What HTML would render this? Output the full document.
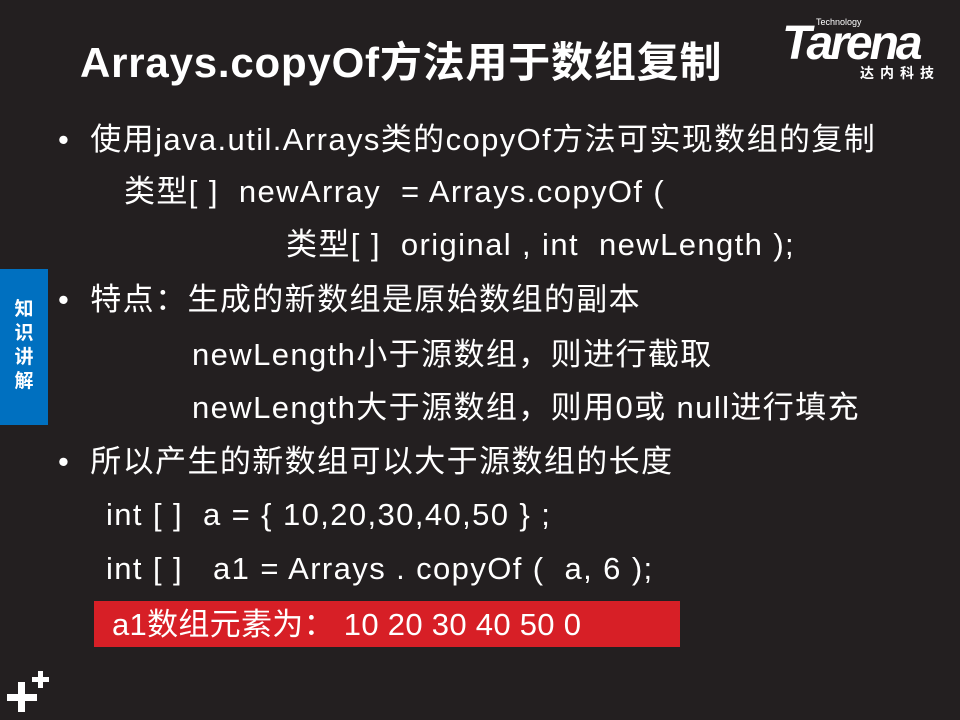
<!DOCTYPE html>
<html><head><meta charset="utf-8"><style>
body{margin:0;width:960px;height:720px;background:#231f20;position:relative;overflow:hidden;font-family:"Liberation Sans","Noto Sans CJK SC",sans-serif;color:#fff}
.t{position:absolute;white-space:pre;font-size:31px;line-height:36px;letter-spacing:1.4px}
</style></head><body>
<div class="t" style="left:80px;top:38px;font-size:42px;line-height:50px;font-weight:bold;letter-spacing:0.8px">Arrays.copyOf方法用于数组复制</div>
<div style="position:absolute;left:782px;top:20px;font:italic bold 48px 'Liberation Sans',sans-serif;letter-spacing:-3px;line-height:48px">Tarena</div>
<div style="position:absolute;left:816px;top:17px;font-size:9px;line-height:10px">Technology</div>
<div style="position:absolute;left:860px;top:65px;font-size:14px;font-weight:bold;letter-spacing:6px;line-height:16px">达内科技</div>
<div style="position:absolute;left:0;top:269px;width:48px;height:156px;background:#0070c0"></div>
<div style="position:absolute;left:12px;top:298px;width:24px;font-size:19px;line-height:24px;font-weight:bold;text-align:center">知<br>识<br>讲<br>解</div>
<div class="t" style="left:58px;top:122px">•  使用java.util.Arrays类的copyOf方法可实现数组的复制</div>
<div class="t" style="left:124px;top:174px">类型[ ]  newArray  = Arrays.copyOf (</div>
<div class="t" style="left:286px;top:227px">类型[ ]  original , int  newLength );</div>
<div class="t" style="left:58px;top:282px">•  特点：生成的新数组是原始数组的副本</div>
<div class="t" style="left:192px;top:337px">newLength小于源数组，则进行截取</div>
<div class="t" style="left:192px;top:390px">newLength大于源数组，则用0或 null进行填充</div>
<div class="t" style="left:58px;top:444px">•  所以产生的新数组可以大于源数组的长度</div>
<div class="t" style="left:106px;top:497px">int [ ]  a = { 10,20,30,40,50 } ;</div>
<div class="t" style="left:106px;top:551px">int [ ]   a1 = Arrays . copyOf (  a, 6 );</div>
<div style="position:absolute;left:94px;top:601px;width:586px;height:46px;background:#d71f26"></div>
<div class="t" style="left:112px;top:607px;letter-spacing:0.3px">a1数组元素为： 10 20 30 40 50 0</div>
<div style="position:absolute;left:7px;top:694px;width:30px;height:7px;background:#fff"></div>
<div style="position:absolute;left:18px;top:682px;width:7px;height:30px;background:#fff"></div>
<div style="position:absolute;left:32px;top:677px;width:17px;height:5px;background:#fff"></div>
<div style="position:absolute;left:38px;top:671px;width:5px;height:17px;background:#fff"></div>
</body></html>
